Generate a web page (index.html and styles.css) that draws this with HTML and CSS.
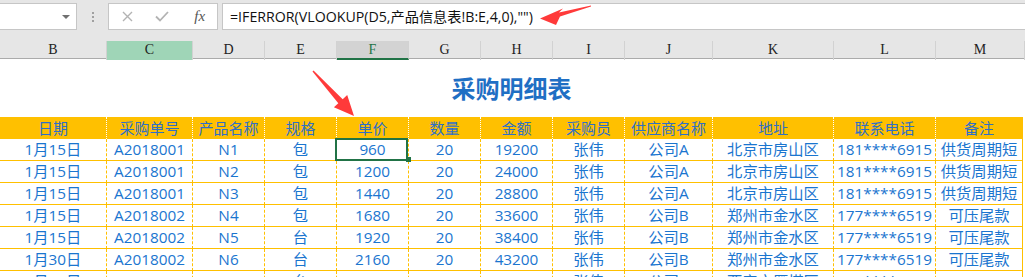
FILE: index.html
```html
<!DOCTYPE html>
<html lang="zh-CN">
<head>
  <meta charset="UTF-8">
  <title>采购明细表</title>
  <link rel="stylesheet" href="styles.css">
</head>
<body>
  <div class="fbar">
    <div class="namebox"><span class="caret"></span></div>
    <div class="grip"><i></i><i></i><i></i></div>
    <div class="fxbtns">
      <span class="slot">
        <svg width="11" height="11" viewBox="0 0 11 11"><path d="M1 1L10 10M10 1L1 10" stroke="#b3b3b3" stroke-width="1.4" fill="none"/></svg>
      </span>
      <span class="slot">
        <svg width="14" height="11" viewBox="0 0 14 11"><path d="M1 5.5L5 9.5L13 1" stroke="#b3b3b3" stroke-width="1.8" fill="none"/></svg>
      </span>
      <span class="slot fx">fx</span>
    </div>
    <div class="formula">=IFERROR(VLOOKUP(D5,产品信息表!B:E,4,0),"")</div>
  </div>

  <div class="colheads">
    <div>B</div><div class="sel">C</div><div>D</div><div>E</div><div class="act">F</div><div>G</div>
    <div>H</div><div>I</div><div>J</div><div>K</div><div>L</div><div>M</div>
  </div>

  <div class="title">采购明细表</div>

  <div class="sheet">
    <div class="th">日期</div><div class="th">采购单号</div><div class="th">产品名称</div><div class="th">规格</div>
    <div class="th">单价</div><div class="th">数量</div><div class="th">金额</div><div class="th">采购员</div>
    <div class="th">供应商名称</div><div class="th">地址</div><div class="th">联系电话</div><div class="th">备注</div>

    <div class="td">1月15日</div><div class="td">A2018001</div><div class="td">N1</div><div class="td">包</div>
    <div class="td sel">960</div><div class="td">20</div><div class="td">19200</div><div class="td">张伟</div>
    <div class="td">公司A</div><div class="td">北京市房山区</div><div class="td">181****6915</div><div class="td">供货周期短</div>

    <div class="td">1月15日</div><div class="td">A2018001</div><div class="td">N2</div><div class="td">包</div>
    <div class="td">1200</div><div class="td">20</div><div class="td">24000</div><div class="td">张伟</div>
    <div class="td">公司A</div><div class="td">北京市房山区</div><div class="td">181****6915</div><div class="td">供货周期短</div>

    <div class="td">1月15日</div><div class="td">A2018001</div><div class="td">N3</div><div class="td">包</div>
    <div class="td">1440</div><div class="td">20</div><div class="td">28800</div><div class="td">张伟</div>
    <div class="td">公司A</div><div class="td">北京市房山区</div><div class="td">181****6915</div><div class="td">供货周期短</div>

    <div class="td">1月15日</div><div class="td">A2018002</div><div class="td">N4</div><div class="td">包</div>
    <div class="td">1680</div><div class="td">20</div><div class="td">33600</div><div class="td">张伟</div>
    <div class="td">公司B</div><div class="td">郑州市金水区</div><div class="td">177****6519</div><div class="td">可压尾款</div>

    <div class="td">1月15日</div><div class="td">A2018002</div><div class="td">N5</div><div class="td">台</div>
    <div class="td">1920</div><div class="td">20</div><div class="td">38400</div><div class="td">张伟</div>
    <div class="td">公司B</div><div class="td">郑州市金水区</div><div class="td">177****6519</div><div class="td">可压尾款</div>

    <div class="td">1月30日</div><div class="td">A2018002</div><div class="td">N6</div><div class="td">台</div>
    <div class="td">2160</div><div class="td">20</div><div class="td">43200</div><div class="td">张伟</div>
    <div class="td">公司B</div><div class="td">郑州市金水区</div><div class="td">177****6519</div><div class="td">可压尾款</div>

    <div class="td">1月30日</div><div class="td">A2018003</div><div class="td">N7</div><div class="td">台</div>
    <div class="td">2400</div><div class="td">20</div><div class="td">48000</div><div class="td">张伟</div>
    <div class="td">公司C</div><div class="td">西安市雁塔区</div><div class="td">139****2288</div><div class="td"></div>
  </div>

  <svg class="marks" width="1025" height="277" viewBox="0 0 1025 277">
    <polygon points="312.5,71.5 338.3,103.2 333.9,107.3 354,116 347.2,95.1 342.7,99.2 313.5,70.5" fill="#ff3a3a"/>
    <polygon points="591,5.5 559,12.5 563,8.5 540,18.5 556,25 560,16.5 591,6.5" fill="#ff3a3a"/>
  </svg>
</body>
</html>
```

FILE: styles.css
```css
body { margin: 0; width: 1025px; height: 277px; overflow: hidden; position: relative; background: #fff; font-family: "Open Sans", "Noto Sans CJK SC", sans-serif; }

.fbar { display: flex; align-items: flex-start; height: 41px; padding-top: 3px; box-sizing: border-box; background: #e6e6e6; }
.namebox { width: 77px; height: 27px; box-sizing: border-box; background: #fff; border: 1px solid #c6c6c6; border-left: 0; display: flex; align-items: center; justify-content: flex-end; padding-right: 6px; }
.caret { width: 0; height: 0; border-left: 4px solid transparent; border-right: 4px solid transparent; border-top: 4px solid #707070; }
.grip { width: 31px; display: flex; flex-direction: column; align-items: center; gap: 2px; padding-top: 9px; }
.grip i { width: 2px; height: 2px; background: #a0a0a0; }
.fxbtns { width: 110px; height: 27px; box-sizing: border-box; background: #fff; border: 1px solid #c6c6c6; display: flex; align-items: center; padding-left: 1px; }
.slot { width: 35px; display: flex; justify-content: center; align-items: center; }
.fx { font-family: "Liberation Serif", serif; font-style: italic; font-size: 15px; color: #555; padding-left: 3px; }
.formula { flex: 1; margin-left: 4px; height: 27px; box-sizing: border-box; background: #fff; border: 1px solid #c6c6c6; border-right: 0; padding-left: 7px; font-size: 14.2px; line-height: 25px; color: #111; white-space: nowrap; }

.colheads { display: grid; grid-template-columns: 107px 86px 72px 72px 72px 72px 72px 72px 88px 121px 102px 1fr; height: 18px; box-sizing: border-box; border-bottom: 1px solid #ababab; background: #e6e6e6; font-family: "Liberation Serif", serif; font-size: 14px; color: #222; }
.colheads div { border-right: 1px solid #d2d2d2; text-align: center; line-height: 17px; box-sizing: border-box; }
.colheads .sel { background: #9fd5b7; }
.colheads .act { background: #d3d3d3; color: #217346; border-bottom: 2px solid #217346; }

.title { width: 1023px; height: 58px; line-height: 58px; text-align: center; font-family: "Noto Sans CJK SC", sans-serif; font-size: 24px; font-weight: bold; color: #1f6fc4; }

.sheet { display: grid; grid-template-columns: 107px 86px 72px 72px 72px 72px 72px 72px 88px 121px 102px 87px; width: 1023px; }
.th { height: 22px; line-height: 22px; box-sizing: border-box; background: #ffc000; border-right: 1px dotted #fff; text-align: center; color: #2f6fc6; font-size: 15px; white-space: nowrap; }
.th:nth-child(12n) { border-right: 1px solid #ffc000; }
.td { height: 22px; line-height: 21px; box-sizing: border-box; border-right: 1px dashed #ffc000; border-bottom: 1px solid #ffc000; text-align: center; color: #1a75cf; font-size: 15.3px; white-space: nowrap; }
.td:nth-child(12n) { border-right: 1px solid #ffc000; }
.td.sel { position: relative; }
.td.sel::after { content: ""; position: absolute; left: -2px; top: -1px; right: 0; bottom: -1px; border: 2px solid #217346; }
.td.sel::before { content: ""; position: absolute; right: -3px; bottom: -2px; width: 5px; height: 5px; background: #217346; z-index: 1; }

.marks { position: absolute; left: 0; top: 0; pointer-events: none; }
```
